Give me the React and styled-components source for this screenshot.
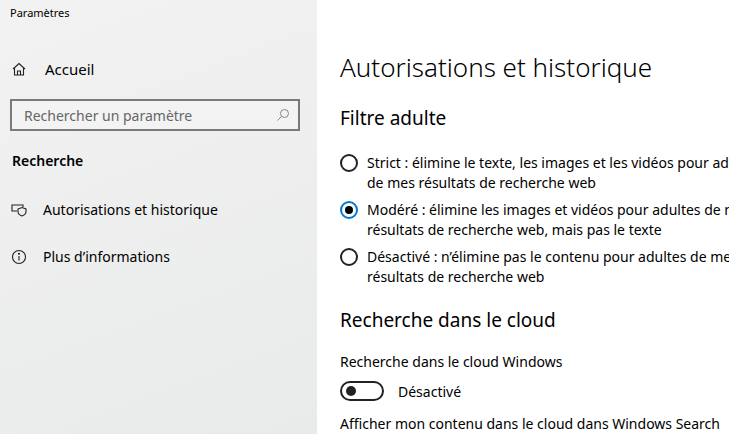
import styled, { createGlobalStyle } from 'styled-components'

const Global = createGlobalStyle`
  html, body { margin: 0; padding: 0; overflow: hidden; }
  body { font-family: 'Segoe UI', 'Noto Sans', sans-serif; color: #000; background: #fff; }
`

const Page = styled.div`
  display: flex;
  width: 729px;
  height: 434px;
  overflow: hidden;
`

const Sidebar = styled.div`
  width: 317px;
  flex-shrink: 0;
  background: linear-gradient(160deg, #f2f2f2, #e9eaea);
  display: flex;
  flex-direction: column;
`

const AppTitle = styled.div`
  font-size: 11px;
  padding: 5px 0 0 10px;
  height: 40px;
`

const NavItem = styled.div`
  display: flex;
  align-items: center;
  gap: ${({ gap }) => gap || 16}px;
  height: 47px;
  padding-left: 11px;
  font-size: ${({ big }) => (big ? 15 : 14)}px;
`

const SearchBox = styled.div`
  margin: 7px 17px 0 10px;
  height: 28px;
  border: 2px solid #7a7a7a;
  background: #f3f3f3;
  display: flex;
  align-items: center;
  justify-content: space-between;
  padding: 0 8px 0 12px;
  font-size: 14px;
  color: #666;
`

const Section = styled.div`
  font-size: 14px;
  font-weight: 600;
  padding: 20px 0 16px 12px;
`

const Main = styled.div`
  flex: 1;
  padding-left: 23px;
  overflow: hidden;
`

const Title = styled.h1`
  font-size: 26px;
  font-weight: 300;
  margin: 49px 0 0;
  white-space: nowrap;
`

const SubTitle = styled.h2`
  font-size: 19px;
  font-weight: 400;
  margin: ${({ m }) => m};
  white-space: nowrap;
`

const Radio = styled.div`
  display: flex;
  gap: 9px;
  margin-bottom: 7px;
  width: 440px;
  font-size: 14px;
  line-height: 20px;
`

const Circle = styled.span`
  flex-shrink: 0;
  width: 18px;
  height: 18px;
  margin-top: 1px;
  border-radius: 50%;
  border: 2px solid ${({ on }) => (on ? '#0078d7' : '#222')};
  box-sizing: border-box;
  display: flex;
  align-items: center;
  justify-content: center;
  &::after {
    content: '';
    display: ${({ on }) => (on ? 'block' : 'none')};
    width: 8px;
    height: 8px;
    border-radius: 50%;
    background: #000;
  }
`

const Label = styled.div`
  font-size: 14px;
  white-space: nowrap;
  margin: ${({ m }) => m};
`

const ToggleRow = styled.div`
  display: flex;
  align-items: center;
  gap: 14px;
  font-size: 14px;
  margin-top: 10px;
`

const Toggle = styled.span`
  width: 44px;
  height: 20px;
  border: 2px solid #222;
  border-radius: 10px;
  box-sizing: border-box;
  display: flex;
  align-items: center;
  padding-left: 4px;
  &::after {
    content: '';
    width: 10px;
    height: 10px;
    border-radius: 50%;
    background: #222;
  }
`

const Icon = ({ children }) => (
  <svg width="16" height="16" viewBox="0 0 16 16" fill="none" stroke="#222" strokeWidth="1.1">
    {children}
  </svg>
)

export default function App() {
  return (
    <Page>
      <Global />
      <Sidebar>
        <AppTitle>Paramètres</AppTitle>
        <NavItem big gap={18}>
          <Icon><path d="M2 8 L8 2.5 L14 8 M3.5 6.8 V14 H12.5 V6.8 M6.5 14 V10 H9.5 V14" /></Icon>
          Accueil
        </NavItem>
        <SearchBox>
          Rechercher un paramètre
          <svg width="14" height="14" viewBox="0 0 14 14" fill="none" stroke="#888" strokeWidth="1">
            <circle cx="8.5" cy="5.5" r="4" />
            <path d="M5.6 8.4 L1.5 12.5" />
          </svg>
        </SearchBox>
        <Section>Recherche</Section>
        <NavItem>
          <Icon><path d="M1 4 V3 H12 V5 M1 4 V9 H6 M1 9 H5" /><path d="M7 7 L11 5.5 L15 7 V10 C15 12.5 11 14 11 14 C11 14 7 12.5 7 10 Z" /></Icon>
          Autorisations et historique
        </NavItem>
        <NavItem>
          <Icon><circle cx="8" cy="8" r="6.5" /><path d="M8 7 V11.5" /><circle cx="8" cy="4.8" r="0.5" fill="#222" /></Icon>
          Plus d’informations
        </NavItem>
      </Sidebar>
      <Main>
        <Title>Autorisations et historique</Title>
        <SubTitle m="20px 0 22px">Filtre adulte</SubTitle>
        <Radio><Circle />Strict : élimine le texte, les images et les vidéos pour adultes de mes résultats de recherche web</Radio>
        <Radio><Circle on />Modéré : élimine les images et vidéos pour adultes de mes résultats de recherche web, mais pas le texte</Radio>
        <Radio><Circle />Désactivé : n’élimine pas le contenu pour adultes de mes résultats de recherche web</Radio>
        <SubTitle m="20px 0 0">Recherche dans le cloud</SubTitle>
        <Label m="19px 0 0">Recherche dans le cloud Windows</Label>
        <ToggleRow><Toggle />Désactivé</ToggleRow>
        <Label m="13px 0 0">Afficher mon contenu dans le cloud dans Windows Search</Label>
      </Main>
    </Page>
  )
}
